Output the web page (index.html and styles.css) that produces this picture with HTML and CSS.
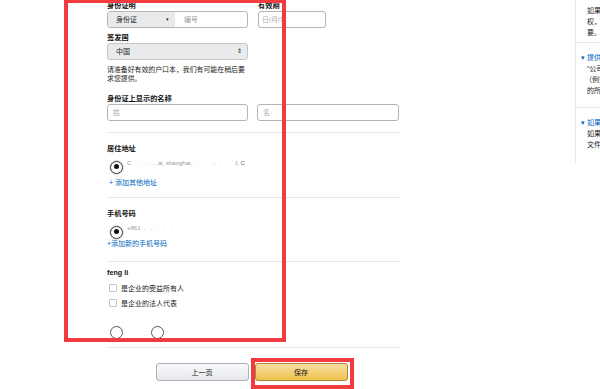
FILE: index.html
```html
<!DOCTYPE html>
<html lang="zh-CN">
<head>
    <meta charset="UTF-8">
    <title>身份信息</title>
    <link rel="stylesheet" href="styles.css">
</head>
<body>
    <div class="page">
        <div class="form">
            <div class="row-id">
                <div>
                    <div class="label">身份证明</div>
                    <div class="id-box">
                        <div class="id-type">身份证<span class="caret">▾</span></div>
                        <div class="id-num">编号</div>
                    </div>
                </div>
                <div>
                    <div class="label">有效期</div>
                    <div class="input date">日/月/年</div>
                </div>
            </div>

            <div class="label mt5">签发国</div>
            <div class="select">中国<span class="updown">⇕</span></div>

            <p class="help">请准备好有效的户口本，我们有可能在稍后要求您提供。</p>

            <div class="label name-label">身份证上显示的名称</div>
            <div class="row-name">
                <div class="input">姓</div>
                <div class="input">名</div>
            </div>

            <hr class="divider div-1">

            <div class="label sec-label">居住地址</div>
            <div class="radio-row addr">
                <span class="radio on"></span>
                <span class="masked">C&nbsp;&nbsp;&nbsp;&nbsp;.&nbsp;&nbsp;&nbsp;&nbsp;.&nbsp;&nbsp;..&nbsp;.ai,&nbsp;shanghai,&nbsp;&nbsp;&nbsp;.&nbsp;&nbsp;&nbsp;&nbsp;.&nbsp;&nbsp;&nbsp;..&nbsp;&nbsp;.&nbsp;&nbsp;&nbsp;&nbsp;&nbsp;&nbsp;&nbsp;&nbsp;&nbsp;<b>/, C</b></span>
            </div>
            <a class="link add-addr" href="#">+ 添加其他地址</a>

            <hr class="divider div-2">

            <div class="label sec-label">手机号码</div>
            <div class="radio-row phone">
                <span class="radio on"></span>
                <span class="masked">+861&nbsp;&nbsp;.&nbsp;&nbsp;&nbsp;.&nbsp;&nbsp;&nbsp;.&nbsp;&nbsp;&nbsp;.&nbsp;&nbsp;&nbsp;.</span>
            </div>
            <a class="link add-phone" href="#">+添加新的手机号码</a>

            <hr class="divider div-3">

            <div class="label owner">feng li</div>
            <label class="check first"><span class="box"></span>是企业的受益所有人</label>
            <label class="check"><span class="box"></span>是企业的法人代表</label>

            <div class="radio-pair">
                <span class="radio"></span>
                <span class="radio"></span>
            </div>

            <hr class="divider div-4">

            <div class="actions">
                <button class="btn btn-prev">上一页</button>
                <button class="btn btn-save">保存</button>
            </div>
        </div>

        <div class="side">
            <div class="tip tip-0">
                <div class="line">如果您是企业的受益所有人或法定代表人</div>
                <div class="line">权，</div>
                <div class="line">要。</div>
            </div>
            <div class="tip">
                <div class="line title">▾ 提供公司受益所有人信息</div>
                <div class="line">“公司受益所有人”是指</div>
                <div class="line indent">（例如股东）</div>
                <div class="line">的所有自然人</div>
            </div>
            <div class="tip tip-last">
                <div class="line title">▾ 如果您不是受益所有人</div>
                <div class="line">如果您无法提供相关</div>
                <div class="line">文件，请联系我们</div>
            </div>
        </div>

        <!-- annotation boxes drawn over the screenshot -->
        <div class="mark mark-form"></div>
        <div class="mark mark-save"></div>
    </div>
</body>
</html>
```

FILE: styles.css
```css
body {
    margin: 0;
    font-family: 'Liberation Sans', 'Noto Sans CJK SC', sans-serif;
    font-size: 7px;
    color: #111;
    background: #fff;
    overflow: hidden;
}

.page {
    position: relative;
    width: 600px;
    height: 389px;
    display: flex;
    overflow: hidden;
}

.form {
    margin-left: 107px;
    width: 293px;
    flex-shrink: 0;
    padding-top: 1px;
}

.label {
    font-weight: 700;
    font-size: 7.2px;
    line-height: 10px;
    height: 10px;
    color: #111;
}

.mt5 {
    margin-top: 5px;
}

.row-id {
    display: grid;
    grid-template-columns: 141px 68px;
    column-gap: 10px;
}

.id-box {
    display: flex;
    height: 17px;
    box-sizing: border-box;
    border: 1px solid #b5b5b5;
    border-radius: 3px;
    overflow: hidden;
}

.id-type {
    width: 67px;
    background: #e9eaec;
    color: #222;
    padding-left: 8px;
    line-height: 15px;
    position: relative;
    box-sizing: border-box;
}

.caret {
    position: absolute;
    right: 6px;
    top: 0;
    font-size: 5px;
}

.id-num {
    flex: 1;
    padding-left: 9px;
    line-height: 15px;
    color: #999;
}

.input {
    height: 17px;
    box-sizing: border-box;
    border: 1px solid #b5b5b5;
    border-radius: 3px;
    padding-left: 5px;
    line-height: 15px;
    color: #aaa;
}

.date {
    padding-left: 3px;
}

.select {
    width: 141px;
    height: 17px;
    box-sizing: border-box;
    border: 1px solid #c5c5c5;
    border-radius: 3px;
    background: #e9eaec;
    padding-left: 8px;
    line-height: 15px;
    color: #222;
    position: relative;
}

.updown {
    position: absolute;
    right: 5px;
    top: 0;
    font-size: 6px;
}

.help {
    margin: 5px 0 0;
    width: 141px;
    font-size: 6.9px;
    line-height: 9.3px;
    color: #222;
}

.name-label {
    margin-top: 10px;
}

.row-name {
    display: grid;
    grid-template-columns: 141px 142px;
    column-gap: 9px;
}

.divider {
    border: 0;
    border-top: 1px solid #e7e7e7;
    margin: 0;
}

.div-1 { margin-top: 11px; }
.div-2 { margin-top: 9px; }
.div-3 { margin-top: 12px; }
.div-4 { margin-top: 8px; }

.sec-label {
    margin-top: 11px;
}

.radio-row {
    display: flex;
    align-items: flex-start;
    margin-top: 7px;
    margin-left: 3px;
}

.phone {
    margin-top: 7px;
}

.radio {
    width: 13px;
    height: 13px;
    box-sizing: border-box;
    border: 1px solid #555;
    border-radius: 50%;
    display: inline-block;
    position: relative;
    flex-shrink: 0;
}

.radio.on {
    border: 1.5px solid #333;
    box-shadow: inset 0 0 0 1.5px #fff, 0 0 0 1px #e2e2e2;
}

.radio.on::after {
    content: "";
    position: absolute;
    left: 2.5px;
    top: 2.5px;
    width: 5px;
    height: 5px;
    border-radius: 50%;
    background: #111;
}

.masked {
    margin-left: 4px;
    margin-top: -2px;
    font-size: 6px;
    line-height: 9px;
    color: #999;
    white-space: nowrap;
}

.masked b {
    color: #555;
    font-weight: 400;
}

.link {
    display: block;
    color: #0066c0;
    text-decoration: none;
    line-height: 10px;
    height: 10px;
    font-size: 7px;
}

.add-addr {
    margin-top: 4px;
    margin-left: 2px;
}

.add-phone {
    margin-top: 0;
}

.owner {
    margin-top: 6px;
    font-family: 'Liberation Sans', sans-serif;
}

.check {
    display: flex;
    align-items: center;
    height: 10px;
    margin-top: 5px;
    margin-left: 2px;
    color: #222;
    font-size: 7px;
}

.check.first {
    margin-top: 5px;
}

.box {
    width: 8px;
    height: 8px;
    box-sizing: border-box;
    border: 1px solid #c4c4c4;
    border-radius: 1px;
    margin-right: 4px;
}

.radio-pair {
    display: flex;
    gap: 28px;
    margin-top: 18px;
    margin-left: 3px;
}

.actions {
    display: flex;
    justify-content: center;
    gap: 6px;
    margin-top: 15px;
    margin-left: -4px;
}

.btn {
    width: 93px;
    height: 18px;
    border-radius: 3px;
    font-family: 'Liberation Sans', 'Noto Sans CJK SC', sans-serif;
    font-size: 7px;
    color: #111;
    padding: 0;
    cursor: pointer;
}

.btn-prev {
    background: linear-gradient(#f7f8fa, #e7e9ec);
    border: 1px solid #adb1b8;
}

.btn-save {
    background: linear-gradient(#f7dfa5, #f0c14b);
    border: 1px solid #a88734;
}

.side {
    margin-left: 175px;
    width: 200px;
    flex-shrink: 0;
    font-size: 7px;
    color: #222;
}

.tip {
    border-left: 1px solid #e7e7e7;
    border-bottom: 1px solid #e7e7e7;
    padding: 9px 0 11px 5px;
}

.tip-0 {
    padding-top: 5px;
    height: 43px;
    box-sizing: border-box;
}

.tip-last {
    height: 55px;
    box-sizing: border-box;
    border-bottom: 0;
    padding-bottom: 0;
}

.line {
    line-height: 11px;
    white-space: nowrap;
    padding-left: 6px;
}

.line.title {
    color: #0066c0;
    padding-left: 0;
}

.line.indent {
    padding-left: 4px;
}

.mark {
    position: absolute;
    box-sizing: border-box;
    border: 4px solid #f23b3f;
}

.mark-form {
    left: 64px;
    top: -1px;
    width: 222px;
    height: 343px;
}

.mark-save {
    left: 251px;
    top: 358px;
    width: 103px;
    height: 31px;
}
```
